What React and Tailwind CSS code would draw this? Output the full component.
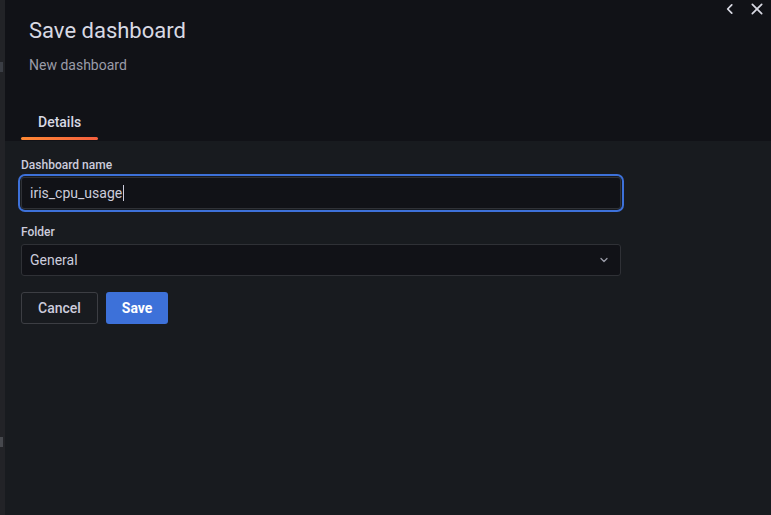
import { ChevronDown } from "lucide-react"

export default function App() {
  return (
    <div className="flex h-[515px] w-[771px] overflow-hidden bg-[#181b1f] text-[#ccccdc]" style={{ fontFamily: "Roboto, 'Liberation Sans', sans-serif" }}>
      {/* backdrop strip from the page behind the drawer */}
      <div className="flex w-[5px] shrink-0 flex-col bg-[#222327]">
        <div className="mt-[62px] h-[10px] w-[3px] bg-[#3a3d44]" />
        <div className="mt-[365px] h-[10px] w-[3px] bg-[#46484d]" />
      </div>

      <div className="flex flex-1 flex-col">
        {/* header */}
        <div className="relative flex h-[141px] flex-col bg-[#111217] px-6">
          <div className="absolute right-[6px] top-[1px] flex items-center gap-[12px]">
            <svg width="14" height="14" viewBox="0 0 24 24" fill="none" stroke="#d8d9e3" strokeWidth="3" strokeLinecap="round" strokeLinejoin="round">
              <path d="M15 5l-7 7 7 7" />
            </svg>
            <svg width="16" height="16" viewBox="0 0 24 24" fill="none" stroke="#d8d9e3" strokeWidth="2.6" strokeLinecap="round">
              <path d="M5 5l14 14M19 5L5 19" />
            </svg>
          </div>
          <h1 className="mt-[17px] text-[22px] leading-[28px] text-[#d8d9e3]">Save dashboard</h1>
          <div className="mt-[11px] text-[14px] leading-[18px] text-[#9a9ca8]">New dashboard</div>
          <div className="mt-auto flex">
            <div className="-ml-2 flex flex-col">
              <span className="px-[17px] pb-[6px] text-[14px] font-medium leading-[18px] text-[#d8d9e3]">Details</span>
              <div className="mb-px h-[3px] rounded-[2px] bg-gradient-to-r from-[#ff8833] to-[#f55f3e]" />
            </div>
          </div>
        </div>

        {/* form */}
        <div className="flex flex-col px-4 pt-[16px]">
          <label className="text-[12px] font-medium leading-[16px] text-[#ccccdc]">Dashboard name</label>
          <div className="mt-[4px] w-[600px] rounded-[4px] ring-2 ring-[#3d71d9] ring-offset-1 ring-offset-[#181b1f]">
            <div className="flex h-[32px] items-center rounded-[3px] border border-[#2f3136] bg-[#111217] px-2 text-[14px] text-[#ccccdc]">
              iris_cpu_usage<span className="ml-px h-[16px] w-px bg-[#ccccdc]" />
            </div>
          </div>

          <label className="mt-[15px] text-[12px] font-medium leading-[16px] text-[#ccccdc]">Folder</label>
          <div className="mt-[4px] flex h-[32px] w-[600px] items-center justify-between rounded-[3px] border border-[#2f3136] bg-[#111217] pl-2 pr-[10px] text-[14px] text-[#ccccdc]">
            <span>General</span>
            <ChevronDown className="h-[12px] w-[12px] text-[#9a9ca8]" strokeWidth={2.5} />
          </div>

          <div className="mt-[16px] flex gap-2">
            <button className="h-[32px] rounded-[3px] border border-[#3c3e43] px-[16px] text-[14px] font-medium text-[#ccccdc]">Cancel</button>
            <button className="h-[32px] rounded-[3px] bg-[#3d71d9] px-[16px] text-[14px] font-bold text-white">Save</button>
          </div>
        </div>
      </div>
    </div>
  )
}
